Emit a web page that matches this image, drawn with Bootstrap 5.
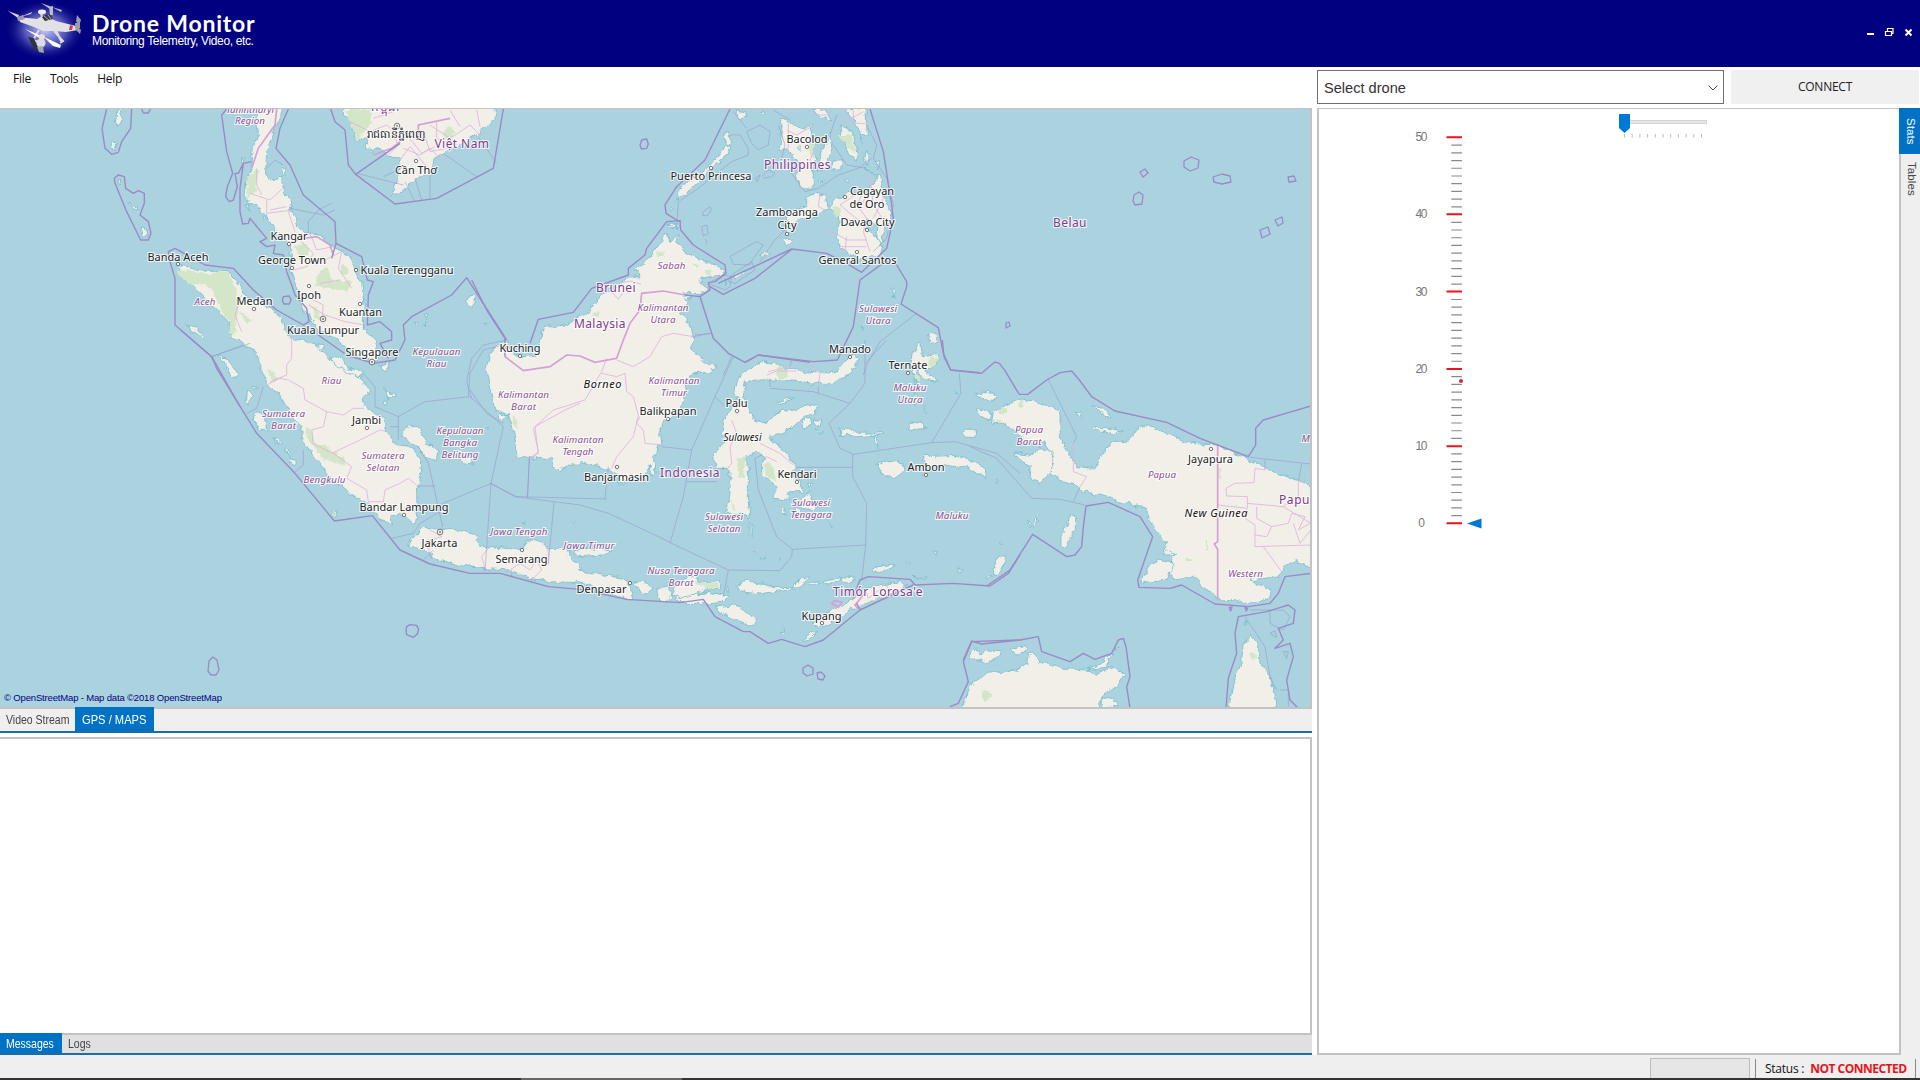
<!DOCTYPE html>
<html lang="en">
<head>
<meta charset="utf-8">
<title>Drone Monitor</title>
<meta name="viewport" content="width=device-width, initial-scale=1">
<link href="https://cdn.jsdelivr.net/npm/bootstrap@5.3.0/dist/css/bootstrap.min.css" rel="stylesheet">
<style>
  html, body { height: 100%; overflow: hidden; }
  body { font-family: "Liberation Sans", Arial, sans-serif; font-size: 12px; line-height: 1; color: #444; background: #fff; }
  svg { display: block; }
  .titlebar { height: 67px; background: #000080; color: #fff; }
  .app-name { font-family: Lato, sans-serif; font-weight: 700; font-size: 23px; line-height: 22px; letter-spacing: .78px; }
  .app-sub { font-size: 12px; line-height: 14px; letter-spacing: -.36px; }
  .menu-strip { height: 41px; width: 1312px; font-family: "Open Sans", sans-serif; font-size: 12px; padding: 6px 0 0 13px; gap: 19px; color: #111; letter-spacing: -.28px; }
  .work { height: 988px; }
  .left-col { width: 1312px; }
  .map-frame { height: 601px; border: solid #c3c3c3; border-width: 1px 2px 2px 0; }
  .tabs-map { height: 24px; background: #efefef; border-bottom: 2px solid #1c6ca8; }
  .ui-tab { padding: 0 0 0 6px; display: flex; align-items: center; white-space: nowrap; }
  .ui-tab span { transform: scaleX(.875); transform-origin: 0 50%; }
  .ui-tab.on { background: #0072c6; color: #fff; }
  .tabs-map .on { margin-top: -2px; padding-top: 2px; width: 79px; padding-left: 7px; }
  .tabs-map .on span { transform: scaleX(.93); }
  .tabs-map .off { width: 75px; }
  .msg-box { height: 298px; margin-top: 4px; border: solid #c3c3c3; border-width: 2px 2px 2px 0; background: #fff; }
  .tabs-msg { height: 20px; background: #e0e0e0; border-bottom: 2px solid #1c6ca8; }
  .tabs-msg .on { width: 62px; margin-top: -2px; padding-top: 2px; }
  .right-col { padding-left: 5px; }
  .connect-row { height: 41px; padding-top: 3px; gap: 7px; }
  .drone-select { width: 407px; height: 34px; border: 1px solid #707070; padding: 2px 5px 0 6px; font-size: 14.6px; color: #333; }
  .btn-connect { width: 188px; height: 34px; background: #f0f0f0; border: 0; border-radius: 0; font-family: "Open Sans", sans-serif; font-size: 12px; color: #222; padding: 0; letter-spacing: -.25px; }
  .stats-panel { width: 584px; border: 2px solid #c3c3c3; border-top-width: 1px; }
  .side-tabs { width: 19px; background: #efefef; }
  .side-tabs div { writing-mode: vertical-rl; width: 19px; line-height: 17px; padding-top: 8px; font-size: 11.5px; letter-spacing: .1px; }
  .side-tabs .on { width: 21px; line-height: 19px; margin-left: -2px; height: 46px; background: #0072c6; color: #fff; padding-top: 10px; }
  .statusline { height: 23px; background: #efefef; font-family: "Open Sans", sans-serif; color: #111; }
  .state-text { width: 159px; padding: 8px 0 0 9px; white-space: nowrap; letter-spacing: -.25px; }
  .state-text b { margin-left: 6px; color: #e8141c; letter-spacing: -.5px; }
  .meter { width: 100px; height: 20px; margin-top: 3px; background: #e6e6e6; border: 1px solid #bcbcbc; border-bottom: 0; }
  .vbar { width: 1px; height: 19px; margin-top: 4px; background: #888; }
  .vbar.first { margin-left: 5px; }
  .taskline { height: 2px; background: #333; padding-left: 521px; }
  .taskline div { width: 161px; height: 2px; background: #666; }
  .land path { fill: #f2efe9; stroke: #6bb8cc; stroke-width: 2.2; }
  .wood path { fill: #d3e6c7; }
  .sea path { fill: none; stroke: #9b8ac6; stroke-width: 4.2; stroke-linejoin: round; }
  .sea .loops path { stroke-width: 1.3; }
  .thin path { fill: none; stroke: #978fc5; stroke-width: 1.9; opacity: .8; }
  .adm path { fill: none; stroke: #deb5dc; stroke-width: 2.6; }
  .nat path { fill: none; stroke: #d3a0d4; stroke-width: 5; }
  .lbl { font-family: "Noto Sans", sans-serif; font-size: 11px; text-anchor: middle; paint-order: stroke; stroke: #fff; stroke-opacity: .8; stroke-width: 2.2px; fill: #222; }
  .lbl .pv { font-style: italic; font-size: 9.8px; fill: #8a4f90; }
  .lbl .ct { font-size: 12px; fill: #7d3b8b; letter-spacing: .5px; }
  .lbl .is { font-style: italic; fill: #111; }
  .towns circle { fill: #fff; stroke: #555; stroke-width: .8; }
</style>
<script src="https://cdn.jsdelivr.net/npm/bootstrap@5.3.0/dist/js/bootstrap.bundle.min.js"></script>
</head>
<body class="d-flex flex-column">

<header class="titlebar d-flex flex-shrink-0">
  <svg width="92" height="67" viewBox="0 0 92 67">
    <defs><radialGradient id="glow"><stop offset="0" stop-color="#c8ccff"/><stop offset=".5" stop-color="#777bd0" stop-opacity=".7"/><stop offset="1" stop-color="#000080" stop-opacity="0"/></radialGradient></defs>
    <ellipse cx="45" cy="30" rx="41" ry="31" fill="url(#glow)"/>
    <path d="M18 17 37 19 44 15 56 21 72 25 79 27 78 30 66 32 54 31 43 31 34 27 20 22Z" fill="#e2e2e6"/>
    <path d="M41 16 50 14 53 19 45 21Z" fill="#333644"/><path d="M44 16l5 4M48 15l3 4" stroke="#aaa"/>
    <ellipse cx="42" cy="12" rx="4" ry="2.4" fill="#eee"/><path d="M41 13l1 4" stroke="#ddd" stroke-width="2"/>
    <path d="M8 11 19 15 18 18ZM20 17 32 12 31 14Z" fill="#d6d6dc"/>
    <path d="M17 17l6-2 2 4-7 2Z" fill="#99a"/>
    <path d="M41 3 52 7 50 9ZM52 7 62 10 61 12ZM49 7l4-1v9l-3 0Z" fill="#bcbcc6"/>
    <path d="M77 15 81 20 79 26 76 21ZM77 26 81 30 80 34 75 29ZM75 23h5v5h-5Z" fill="#9c9ca8"/>
    <path d="M70 25 73 26 72 30 69 30Z" fill="#d04040"/>
    <path d="M54 31 63 41 60 43M39 30 33 40 41 43M56 30l5 11" stroke="#ddd" stroke-width="2" fill="none"/>
    <path d="M25 29 42 36 41 39ZM44 37 61 45 60 48 53 46Z" fill="#fff"/>
    <path d="M28 37 34 38 39 51 34 49Z" fill="#30323d"/>
    <circle cx="41" cy="43" r="4.5" fill="#dcdce4"/><path d="M37 47 43 46 44 53 39 52Z" fill="#9aa"/><circle cx="42" cy="37" r="3" fill="#e8e0d8"/>
  </svg>
  <div class="flex-grow-1 pt-2">
    <div class="app-name mt-1">Drone Monitor</div>
    <div class="app-sub">Monitoring Telemetry, Video, etc.</div>
  </div>
  <svg width="60" height="67" viewBox="1860 0 60 67" fill="none" stroke="#fff" stroke-width="2">
    <path d="M1867 34h7"/><path d="M1885.500 31.500h6v4h-6zM1887.500 31v-2.500h5.500v5h-1.500" stroke-width="1.200"/><path d="M1905.500 29.500l6 6M1911.500 29.500l-6 6"/>
  </svg>
</header>

<main class="work d-flex flex-shrink-0">
  <section class="left-col flex-shrink-0 d-flex flex-column">
    <nav class="menu-strip d-flex flex-shrink-0"><span>File</span><span>Tools</span><span>Help</span></nav>
    <div class="map-frame flex-shrink-0">
      <svg width="1310" height="598" viewBox="0 109 1310 598">
        <defs>
          <filter id="coast" x="0" y="0" width="1" height="1"><feTurbulence type="fractalNoise" baseFrequency=".13" numOctaves="3" seed="4"/><feDisplacementMap in="SourceGraphic" scale="7" xChannelSelector="R" yChannelSelector="G"/></filter>
        </defs>
        <rect y="109" width="1310" height="598" fill="#aad3df"/>
        <g filter="url(#coast)">
        <rect y="109" width="1310" height="598" fill="#aad3df"/>
        <g class="land">
          <g transform="translate(90 105) scale(.33333)">
            <path d="M505 -6 498 60 505 90 490 120 485 190 470 220 462 270 475 300 500 295 515 320 540 350 550 380 580 400 600 420 606 470 600 490 620 540 635 600 660 640 690 680 740 700 770 730 830 765 862 768 870 745 845 690 820 670 822 600 815 530 790 480 760 440 730 425 690 390 650 385 620 360 607 320 600 285 580 265 575 220 535 225 527 190 530 140 545 100 560 60 590 -6Z"/>
            <path d="M760 -6V30L785 50 792 90 800 112 820 100 840 95 825 125 850 140 870 130 890 150 930 165 930 190 915 240 905 268 935 265 960 235 1020 200 1045 150 1090 130 1150 95 1190 60 1215 45 1216 -6Z"/>
            <path d="M80 20l12-5v30l-8 22-8-12zM64 112l12 0v24l-12-4zM85 225l10 3-4 8zM110 290l10 4-4 8zM128 310l14-6-5 14zM150 365l18 6 3 22-14 0zM290 660l18 5 36 28-4 6-42-24zM390 755l18 3 30 40 2 20-14 2-14-28zM454 160l12 0-5 14zM578 190l12 0v18l-10 4zM515 335l12 4-5 10zM468 300l8 0 0 22zM1130 575l20-5 6 22-12 15-14-12zM972 652l12 2-8 12zM1004 632l10 0-4 12zM1004 650l8 5-6 8zM1184 655l8 2-4 6zM682 715l15-4 7 15-10 16-16-10zM722 752l28 6 20 30 30 5 20 15-14 12-28-10-20-14-22-12zM866 785l32-12-2 24-16 2zM885 850l20 15 15 0-5 10-18 0 0 8zM876 886l16 0-6 15-8-5zM486 848l18 0 0 6-18 0zM473 858l10 12-5 28-10-8z"/>
          </g>
          <g transform="translate(160 330) scale(.33333)">
            <path d="M52 -197 120 -177 200 -175 230 -145 255 -105 310 -75 370 -35 375 0 400 30 440 35 470 45 500 75 530 110 575 130 600 150 635 180 610 205 612 230 640 250 675 265 680 310 715 345 755 350 775 380 785 410 775 450 770 500 772 560 765 582 745 570 720 550 690 560 695 588 660 560 630 530 600 510 560 480 510 440 470 390 430 340 420 290 380 230 355 190 320 165 300 110 290 70 250 45 215 20 210 -20 180 -50 130 -100 80 -150Z"/>
            <path d="M283 250 305 248 320 280 322 303 300 300 280 270ZM342 323l10 4 10 18-10 0zM373 352l12 10 2 20 18 10 0 16-12-8-12-25zM518 545l16 4-4 8-14-4zM725 315 745 290 778 290 800 340 835 360 828 390 800 380 770 350 735 325ZM900 380l40 0-5 22-30-4zM1015 250l28 8-15 14-12-4zM975 290l10 0-4 8z"/>
            <path d="M740 650 770 610 790 590 840 600 870 595 950 615 960 650 1000 650 1080 660 1105 630 1130 630 1165 655 1220 655 1240 690 1270 725 1330 735 1395 745 1420 790 1415 812 1370 800 1320 775 1260 758 1170 755 1110 745 1050 720 960 715 880 700 810 685 815 670 760 650ZM1240 665l60-10 55 5-20 14-80 6zM1425 755l40 5 15 18-20 16-35-26zM1490 775l30-6 15 22-10 25-25-2zM1545 780l30-20 40 12 0 20 30-5 60 10-20 20-40 5-60-2-40-10zM1232 575l10 0-2 10zM1087 575l4 0 0 8z"/>
          </g>
          <g transform="translate(470 210) scale(.33333)">
            <path d="M110 395 125 430 160 440 195 435 210 420 215 370 225 350 300 340 350 310 380 270 420 240 470 205 510 200 495 175 540 140 575 95 590 70 600 95 625 70 620 95 650 130 690 150 740 160 760 180 750 195 690 205 690 220 720 240 690 250 640 250 650 280 630 310 660 340 670 380 665 410 700 455 740 475 700 490 665 490 645 530 645 570 600 625 570 650 575 700 550 740 555 790 545 800 540 765 530 790 500 800 450 825 440 790 390 770 330 755 260 783 245 750 200 745 145 740 130 660 110 610 75 600 60 540 48 480 60 430 90 395Z"/>
            <path d="M595 45l20-5-5 15zM618 40l8 5-5 15zM640 260l22 4-15 8zM790 200l35-22-5 12-25 18zM868 135l18-8 18 4-20 12zM765 205l8 10-6 14z"/>
          </g>
          <g transform="translate(640 105) scale(.33333)">
            <path d="M110 285 118 255 150 220 185 205 220 165 260 120 275 128 265 150 210 195 190 225 155 245 135 270ZM255 80l12 0 4 40-14-4zM285 15l30 5 5 12-22 10zM365 18l15-4-2 15zM425 40l30 20 45 10 15-8-2 75 15 20-12 60 8 22-14 15-25-8-14-20 5-60-40-35-15 6 5-40zM570 85 577 140 545 195 528 200 540 160 555 110ZM580 165l26 0 4 15-15 15-22-8zM518 10l28 0 30 38-35-12zM600 60l40 20 8 55 8 30-30-15-18-60zM612 12l65-4 5 85-20 0-20-50zM672 190l22 15 28 10 10 55 20 50-4 35-15 10-10 58-12-20 2-40-30-20-8 30 25 10 30 45-8 30-30-5-32 12-60-40-12-30 10-40-5-30-25-15 22-30 40-18 50 0 35-45zM440 330l40-20 20-5 0-30 35-12 22 15 4 30-25 15-5 20-45-5-30 20-5 25-14 0zM422 403l20-6 12 10-14 12zM680 140l8 12-6 28-8-20zM705 170l14 0-4 25zM472 125l12-6-2 20zM535 222l14 4-8 6zM610 225l16 0-6 8zM85 355l25 0-8 10zM92 305l8 5-4 12zM755 545l12 10-4 22zM664 662l4 12-4-2zM662 95l8 15-6-2z"/>
          </g>
          <g transform="translate(680 340) scale(.33333)">
            <path d="M165 195 175 170 160 160 175 120 185 100 210 90 235 65 280 70 300 85 340 85 370 95 420 100 470 95 500 60 520 45 535 50 525 80 490 115 460 130 400 130 310 120 230 120 200 125 185 170 215 215 225 245 260 245 300 215 350 210 380 195 410 195 410 220 370 230 330 270 280 285 265 290 300 320 330 350 345 385 330 400 365 430 370 455 320 455 325 480 285 475 285 440 245 400 245 370 260 350 230 335 195 350 205 385 205 490 210 530 185 520 140 520 150 460 150 400 145 385 105 385 100 340 130 310 130 240Z"/>
            <path d="M370 240l20-5 5 20-20 10zM400 240l22 0-5 18-15 0zM405 268l20 8-8 4zM478 265l30 0 32 15 75-2-10 6-70 6-30-4-26 4zM580 290l10 0 4 30-8-8zM290 185l50-14-8 10-36 12zM722 5l5 45 20-2 25-5-2 30-35 20 38 30-45-5-15-30-8 35 8 60-10 10 4-70-14-55 4-30zM745 -15l20-5 5 25-16 6zM690 246l40 5 5 15-50 2zM735 200l5 15-8-4zM848 278l15-10 25 0 2 18-30 6zM888 160l40-6 25 15-15 12-50-12zM890 208l30 0 15 12-5 20-20-5zM820 150l14 14-8-4zM590 375l30-12 48 8 8 20-35 22-35-12zM732 350l100-4 35 15 45 20 8 32-60-30-50-5-78 5zM1000 340l25-2 0 14-25-4zM725 403l18 0-8 8zM382 430l18 0-10 12zM378 460l12-5 6 35 14 10-12 14-30-14-3-20zM305 500l10 5 4 20-8-2zM345 500l20 10 0 30-18-10zM210 550l5 0 2 40-6-4zM220 632l10 4-6 6zM232 650l25 5-10 2zM298 652l6 4-4 4zM168 740 200 720 280 740 340 740 370 710 385 712 368 740 300 752 240 762 180 755ZM385 730l25-8 10 6-25 10zM430 725l50-12-5 10-40 12zM480 715l45-4 0 10-40 8zM0 720l50-12 10 18 55-5 5 25-60 10-60 20-30-10zM140 735l8 8-4 12zM108 800 170 795 235 840 220 857 180 845 110 815ZM415 860 400 850 420 830 520 775 560 745 660 725 682 735 620 770 530 800 470 840 430 862ZM370 900l20-18 22-8-8 14-20 14zM295 875l20-6-8 12zM576 690l20-10 45-8-5 12-55 14zM700 710l40 5-10 4zM832 690l18 0-8 10zM760 636l12 2-6 8zM680 666l10 4-8 4zM940 685 955 650 972 645 978 660 955 700 942 700ZM965 605l8 2-6 8zM920 712l15-6-5 10zM950 425l8 2-4 8zM445 545l12 18-6-4z"/>
          </g>
          <g transform="translate(950 380) scale(.33333)">
            <path d="M545 160 585 135 625 150 720 190 800 195 880 230 940 262 1010 290 1050 300 1100 330 1100 575 1040 545 1000 560 990 590 900 600 965 630 960 650 920 670 860 662 805 662 770 630 730 590 670 600 655 570 670 530 640 505 650 490 610 440 590 385 530 370 450 345 400 335 375 315 330 300 300 275 310 230 290 200 280 185 240 195 190 150 165 130 125 130 130 100 165 75 215 57 260 65 330 90 330 180 365 230 380 260 430 265 485 185 540 180Z"/>
            <path d="M190 220 240 225 270 205 310 215 300 280 270 310 245 300 240 265ZM575 608 590 565 625 538 665 545 665 575 650 600ZM640 505l40 18-30 2zM425 140l50 5 45 8-30 8-60-12zM425 78l25 5 35 25-20 5-15-20zM378 98l14-2-4 14zM360 400l16 15 0 35-15 20-10 30-18 2 0-45 18-15zM262 398l6 0-8 30-10 12zM235 420l8 10-6 8zM890 780l8 4-8 4zM880 725l14 5-6 8z"/>
            <path d="M30 1000 60 920 110 880 200 870 230 850 240 815 270 845 340 865 400 870 440 880 490 860 525 880 500 920 455 945 450 1000ZM55 840 75 800 90 825 110 810 155 812 150 830 110 850 90 840ZM178 805l50-8 2 14-25 12-20-6zM835 1000 850 900 875 850 880 790 905 770 925 800 930 850 960 890 975 940 978 1000ZM410 868l45-18 50-50-40 62zM455 950l30 5 20 20-40 15z"/>
          </g>
        </g>
        <g class="wood">
          <g transform="translate(90 105) scale(.33333)"><path d="M262 490 300 500 350 510 380 500 415 505 440 560 445 610 435 690 420 690 420 650 390 610 370 560 340 535 300 540 270 515ZM765 12 840 12 845 50 820 80 800 110 785 60ZM1060 80l20-15 15 15-10 20-20 0zM470 220l30-30 10 30-20 50-20 10zM610 420l40 0 10 30-30 15zM690 500l20-15 15 40 60 5-10 30-40-10-60-5zM755 480l20 5 0 25-20-5zM660 600l20 10 15 40-20-10zM300 665l35 30-8-2zM440 610l20 20 30 10-20 15zM530 790l30 20-10 15z"/></g>
          <g transform="translate(160 330) scale(.33333)"><path d="M430 290 450 300 465 340 500 345 520 365 550 380 560 410 520 395 490 390 470 360 440 320ZM320 120l30 20-10 10zM515 545l20 8-18 4z"/></g>
          <g transform="translate(470 210) scale(.33333)"><path d="M370 310l20-10-4 20-20 0zM562 125l16 0 0 20-16-5zM665 160l25 5-8 10zM125 615l18 15 0 30-15-20zM700 180l25 4 0 12-20-4z"/></g>
          <g transform="translate(640 105) scale(.33333)"><path d="M595 90l40 0 10 50-20-15zM580 310l25-5 0 30-20 0zM415 795l30 0 0 20-30 0zM510 105l15 15-5 40-10-20zM868 755l22 8-10 25-15-10z"/></g>
          <g transform="translate(680 340) scale(.33333)"><path d="M290 85h25v30h-20ZM170 355h25v55h-20ZM250 370l20-5 20 60-30-15zM155 480l15 30-12-5zM750 60l22-10-5 22-20 8zM700 105l20 0-5 20zM45 720l20 10 45-5 5 20-30 5-30-12z"/></g>
          <g transform="translate(950 380) scale(.33333)"><path d="M150 85h22v18h-22ZM208 62h12v20h-12ZM140 118h16v12h-16ZM95 935l25-6 0 25-20 10zM900 815l14 6 8 20-14 0zM805 260h6v40h-6ZM768 480h6v30h-6ZM710 535l16 0 0 8-16 0z"/></g>
        </g>
        </g>
        <g class="adm">
          <g transform="translate(90 105) scale(.33333)"><path d="M500 190v50l15 30M480 265l60 20 50-45M530 285v40l80-10M540 315l50-10M595 320l20 60M560 375l40 40 30-10 40 40-20 40-40 10M660 385l20 50 50-10M675 480l80-40-10 50 40 60M690 535l60-10M655 600l50 30 60 20 60 10M640 570l60 30-5 50M455 570l-20 60 20 50M605 690v70l-15 20v30l-50 20M780 50l60 30 50-20 40 30 70-10M850 40l60-20M895 150l30-30-15-30M930 165l30-40 50 60M940 130l50 20 30-20 40 40M955 95l40 50 40-20M1000 80l20 60 50-10M1020 60l60 40 60-40 30 30M1080 15l30 50M1160 15l10 50M1040 50v50l60 20"/></g>
          <g transform="translate(160 330) scale(.33333)"><path d="M320 165 360 145 385 150 430 175 435 210 500 245 550 255 580 235 612 235M500 245 490 290 455 300 460 340 515 370 600 330 660 300 680 305M520 370 575 410 560 445 620 480 625 515 670 515 675 480 720 460 745 445 770 465M810 600l35 20-35 10-5 50M985 655 965 680 975 715M1050 720l30-20 30 20 20-30 15 30-30 30M1165 655v50M1105 380v10M1260 220l-45 20-90 50 10 80-30 20"/></g>
          <g transform="translate(470 210) scale(.33333)"><path d="M180 745 205 725 190 655 250 600 345 570 395 485 410 445M395 490 440 500 465 490 470 545 490 560 505 615 490 680 440 740 425 775M510 620 500 640 520 660 525 700 575 705M440 450 490 470 540 440 575 380 610 370 670 380M420 240l25 28 20-30-12-20 30-5 30 10"/></g>
          <g transform="translate(640 105) scale(.33333)"><path d="M445 55v75M440 75l30 15 45-25M500 190l25-60M600 60l70-40M640 15l0 40 40 0M540 265l-5 40 20 10M670 260l-20 40 30 40-10 40 20 60M570 375l50 30h60M620 395l-5 45M690 210l10 90 40 60M660 260l-60 40 60 50M600 425h80M700 230l-40 80M520 30h50M385 800l60-15M730 280l-30 60"/></g>
          <g transform="translate(680 340) scale(.33333)"><path d="M260 105l30-12 60 0M390 70l30 30-5 35M155 240l15 40-20 40 5 50-15 20M240 310 300 340 340 375M260 350l30 15M555 745l10 30 40-30M620 735l10 30M455 790l25 10"/></g>
          <g transform="translate(950 380) scale(.33333)"><path d="M370 190V275L410 290 390 320M945 270 915 265 912 308 855 310 828 325 830 348 892 350 892 385 805 375M892 370 1000 380 1083 430M885 415 915 435V500L1083 495M920 380v35l45 25-15 30-35-5M965 440l50-10 10-30 40 10-20 40 35-20M1045 300v60M1000 380l40-30M940 500l55 75M1030 430l20 60 33-40"/></g>
        </g>
        <g class="nat">
          <g transform="translate(90 105) scale(.33333)"><path d="M560 12 555 60 505 130 485 190M640 400 680 395 720 420 730 450M850 150 905 130 930 110M985 100 985 60 1080 40"/></g>
          <g transform="translate(470 210) scale(.33333)"><path d="M105 440 160 482 240 470 290 435 330 438 375 457 440 445 460 390 480 340 510 300 515 250 580 243 645 255"/></g>
          <g transform="translate(680 340) scale(.33333)"><path d="M455 790l10-8 20 4-10 16zM515 780l15-15 20 0-25 30 8 10"/></g>
          <g transform="translate(950 380) scale(.33333)"><path d="M803 195V485L793 492 803 508V660"/></g>
        </g>
        <g class="thin">
          <g transform="translate(90 105) scale(.33333)"><path d="M800 205 940 240M880 215 935 190M945 230l30 60M975 220l20 65M1020 200v80M1060 145l100 70M1165 95l55 80M530 190l25-25 25 15M600 310l100 20 35-15M655 380v-30l30-35 40-20M365 755 480 715M1250 705 1180 720 1145 760 1130 830 1145 880"/></g>
          <g transform="translate(160 330) scale(.33333)"><path d="M150 82 250 45M260 250 290 235 310 170M400 430 430 405 430 360M610 130 645 170V230L715 260V330M690 290h25M715 260 795 215 930 200 970 235 1030 290 993 460 975 725M925 200 930 130 970 60 1030 45M775 350 805 400 848 590M770 468H825M845 522 993 460 1065 500 1260 525M1108 385 1103 503M1182 517 1165 700M695 625 760 610 780 580 840 545M790 690l30-30M1055 720v20M1115 745v15M1260 525 1345 550 1475 610 1560 652"/></g>
          <g transform="translate(470 210) scale(.33333)"><path d="M0 540 50 610 100 640M178 745 172 860M60 820 140 860 410 867M415 770 405 867M575 710 665 720 735 560 790 440M735 560 765 590M665 720 640 860 600 1000M670 380 720 370M650 815H740"/></g>
          <g transform="translate(640 105) scale(.33333)"><path d="M830 625 720 710 680 780 670 810M165 690 215 685M275 755 250 810M320 80l40-20 30 20-5 40-30 15-20-20zM270 90l30 0 25 40 0 20-50 20-100 80-60 40-5 80M280 20l40 50M400 15l50 30M415 60l20 60-10 40 40 60 30 40 40-10 60-40 60-20 40-30M580 120l40 60 60 10M590 30l-30 90M680 60l30 60-10 40 40 60 20 80-20 100-40 40M360 470l40-60 40-40M190 320l20-15 4 10-12 18-14-2zM185 365l15-5 5 25-15 8zM345 220l15-10-8 20zM195 402l6 8-4 8M270 455l60-35 20-10 20 10-30 40-10 20-50-2zM365 215l20-20 20 10-10 10-25 5M205 535l45-25 25 5-5 30-15 10zM275 510l60-40 10 25-60 40-20-5z"/></g>
          <g transform="translate(680 340) scale(.33333)"><path d="M555 0V130L510 190 447 250 480 325 520 343 755 308 825 305 950 340 1020 400M620 0 555 70M838 100 843 160 755 308M270 145 400 155 510 190M270 140V115M415 140v20M335 60l-5 20M345 382H518M518 343V410L560 490 557 615 545 720M557 615 337 628 290 590 235 450 225 355 245 345M337 628 335 650 300 692 145 690 0 622M145 690 130 770"/></g>
          <g transform="translate(950 380) scale(.33333)"><path d="M295 0 330 70 380 170 370 190M60 200 140 235 245 355 330 358 405 375M390 320 370 365M900 232 1083 252M945 240v30M1055 252l-10 50M885 710l60 90 15 90 20 40M900 690l100 0 20 20-20 40-40-20 0-40M960 760l15-8 5 20zM1000 815l15 0-5 20zM990 930l25 0 0 50"/></g>
        </g>
        <g class="sea">
          <g transform="translate(90 105) scale(.33333)"><path d="M50 12 36 70 45 130 65 148 85 142 95 110 122 70 125 12M155 12l5 12 15 0 6-12M75 235 73 220 85 210 103 215 107 250 130 265 145 257 163 265V295L150 330 175 350 183 385 175 405H152L110 320ZM410 12 395 30 410 140 428 205 412 245 407 275 418 290 430 285 442 245 435 205 445 205 460 175 485 170M460 175 450 250 450 320 458 357 475 355 480 340 530 400 510 410 530 425 555 420 550 445 580 450 590 500 605 540 615 570 650 610 657 650 640 660 560 615 490 555 430 490 345 480 255 430 235 440 240 470 255 520V660L365 755 450 905M685 690 770 750 850 775 915 765 945 705 940 660 965 635 1085 570 1130 518 1250 705M595 12 570 70 558 130 600 180 640 270 735 350 738 415 815 455 832 525 850 530 835 570 832 660 870 650 905 680 905 705 870 715 895 760M738 415 725 460M722 12 735 50 765 75 775 180 797 208 915 297 1040 280 1210 190 1240 12M797 208 930 115M580 575l18-2 5 12-5 12-16 0-5-10z"/></g>
          <g transform="translate(160 330) scale(.33333)"><path d="M62 0 155 80 170 115 250 245 290 310 405 430 523 573 637 557 720 660 810 702 930 730H1020L1165 770 1260 778 1400 808 1560 818M740 890l10-6 20 2 6 12-4 14-12 10-20-8-2-12z"/></g>
          <g transform="translate(470 210) scale(.33333)"><path d="M5 210 50 300 105 385V440M180 400 205 328 310 307 365 235 475 195 475 175 525 135 530 115 590 35 630 32 632 60 670 105 765 165 768 190 735 215 715 218 720 240 690 260 645 255M720 230 760 253 855 205 965 118M690 260 730 385 775 430 825 457 865 435 1020 457"/></g>
          <g transform="translate(640 105) scale(.33333)"><path d="M270 12 195 165 110 245 75 300 78 325 110 345 122 350M235 535 455 432 560 445 620 475 665 502 740 430 760 340 755 300 730 140 690 12M770 480 800 530V545L783 597 895 668 910 745 932 795 1020 803M770 478 735 470 660 525 640 665 592 765 520 770 355 750 315 772M5 105l15-3 5 15-5 13-16 2-4-12z"/></g>
          <g transform="translate(680 340) scale(.33333)"><path d="M787 0 792 50 812 90 905 100 930 78 945 66 958 70 975 92 1017 162M0 788 70 778 105 830 190 875 210 875 265 910 305 898 375 920 430 900 540 810 700 735M520 770 540 720 565 710 690 718 705 735 820 730 930 738 985 700 1020 645M540 808 530 790M850 960 875 903 905 912 1020 900"/></g>
          <g transform="translate(950 380) scale(.33333)"><path d="M207 43H233L290 0 330 -22 365 -27 388 0 425 50 495 93 650 127 750 175 895 230 917 195V145L940 120 1083 78M110 618 180 570 248 463 350 530 375 525 395 500 400 440 408 378 475 367 570 410 608 470 563 600 567 622 660 625 695 615 795 672 895 680 960 670 985 640 1005 590 1083 580M0 980 25 970 55 905 40 845 65 785 210 780 265 770 275 815 360 845 400 820 435 838 485 820 505 780 520 775 528 800 540 890 530 920 540 985M828 985 835 895 860 820 855 760 865 710 950 695 1015 675 1035 690 1030 730 985 745 1000 780 975 805 1020 790 1030 830 1010 900 1020 960 1045 985M838 683l8-2-4 12zM885 683l8 2-4 8z"/></g>
          <g class="loops"><path d="M209 661l4-4 4 3 1 5 1 5-3 5-5 0-3-4zM803 668l5-3 5 3 0 6-6 2-4-3zM817 673l4-1 4 4-2 4-5-1zM1184 161l7-4 8 3-1 8-8 3-6-4zM1134 195l5-3 4 3-1 9-7 1-2-4zM1213 177l9-3 8 2 1 6-9 2-8-2zM1260 230l8-3 2 7-8 4zM1275 220l7-3 1 6-5 3zM1288 177l6-1 2 5-7 1zM1140 172l5-3 3 4-5 4zM1006 323l3-1 1 4-4 2z"/></g>
        </g>
        <g class="towns">
          <circle cx="178" cy="264" r="1.700"/><circle cx="254" cy="309" r="1.700"/><circle cx="289" cy="244" r="1.700"/><circle cx="292" cy="268" r="1.700"/><circle cx="309" cy="286" r="1.700"/><circle cx="356" cy="270" r="1.700"/><circle cx="360" cy="304" r="1.700"/><circle cx="416" cy="161" r="1.700"/><circle cx="367" cy="428" r="1.700"/><circle cx="404" cy="515" r="1.700"/><circle cx="522" cy="550" r="1.700"/><circle cx="520" cy="356" r="1.700"/><circle cx="668" cy="419" r="1.700"/><circle cx="617" cy="467" r="1.700"/><circle cx="737" cy="411" r="1.700"/><circle cx="711" cy="168" r="1.700"/><circle cx="807" cy="147" r="1.700"/><circle cx="787" cy="234" r="1.700"/><circle cx="845" cy="197" r="1.700"/><circle cx="867" cy="230" r="1.700"/><circle cx="857" cy="252" r="1.700"/><circle cx="850" cy="357" r="1.700"/><circle cx="908" cy="373" r="1.700"/><circle cx="797" cy="482" r="1.700"/><circle cx="926" cy="475" r="1.700"/><circle cx="822" cy="623" r="1.700"/><circle cx="1211" cy="449" r="1.700"/><circle cx="630" cy="583" r="1.700"/>
          <g><circle cx="323" cy="319" r="2.800"/><circle cx="323" cy="319" r=".8"/><circle cx="372" cy="362" r="2.800"/><circle cx="372" cy="362" r=".8"/><circle cx="397" cy="126" r="2.800"/><circle cx="397" cy="126" r=".8"/><circle cx="440" cy="532" r="2.800"/><circle cx="440" cy="532" r=".8"/></g>
        </g>
        <g class="lbl" transform="translate(0 -.3)">
          <text x="178" y="261" textLength="61">Banda Aceh</text><text x="254.500" y="305.500" textLength="36">Medan</text><text x="289" y="240.500" textLength="37">Kangar</text><text x="292" y="264" textLength="68">George Town</text><text x="309" y="299" textLength="24">Ipoh</text><text x="407" y="274" textLength="93">Kuala Terengganu</text><text x="360.500" y="316" textLength="43">Kuantan</text><text x="323" y="334" textLength="72">Kuala Lumpur</text><text x="372" y="356" textLength="53">Singapore</text>
          <text x="396" y="138" textLength="58">រាជធានីភ្នំពេញ</text><text x="416" y="174.500" textLength="42">Cần Thơ</text>
          <text x="366.500" y="424" textLength="29">Jambi</text><text x="404" y="511" textLength="89">Bandar Lampung</text><text x="439.500" y="547.500" textLength="36">Jakarta</text><text x="521.500" y="563" textLength="52">Semarang</text><text x="601.500" y="593" textLength="50">Denpasar</text>
          <text x="520" y="352" textLength="41">Kuching</text><text x="668" y="415.500" textLength="57">Balikpapan</text><text x="616.500" y="481" textLength="65">Banjarmasin</text><text x="736.500" y="407.500" textLength="22">Palu</text>
          <text x="711" y="180" textLength="81">Puerto Princesa</text><text x="807" y="143" textLength="41">Bacolod</text><text x="787" y="216" textLength="62">Zamboanga</text><text x="787" y="229.500" textLength="19">City</text><text x="872" y="195" textLength="44">Cagayan</text><text x="867" y="208.500" textLength="35">de Oro</text><text x="867.500" y="226" textLength="54">Davao City</text><text x="857.500" y="264" textLength="78">General Santos</text>
          <text x="850" y="353" textLength="42">Manado</text><text x="908" y="369" textLength="39">Ternate</text><text x="797" y="478" textLength="39">Kendari</text><text x="926" y="471" textLength="37">Ambon</text><text x="821.500" y="620" textLength="40">Kupang</text><text x="1210.500" y="463" textLength="45">Jayapura</text>
          <g class="is"><text x="602.500" y="388.500" textLength="38">Borneo</text><text x="742.500" y="441.500" font-size="10" textLength="38">Sulawesi</text><text x="1216" y="517.500" textLength="63">New Guinea</text></g>
          <g class="ct"><text x="462" y="148.500" textLength="55">Việt Nam</text><text x="616" y="292.500" textLength="40">Brunei</text><text x="600" y="328" textLength="52">Malaysia</text><text x="690" y="477.500" textLength="60">Indonesia</text><text x="797.500" y="169" textLength="67">Philippines</text><text x="1070" y="227" textLength="34">Belau</text><text x="878" y="596" textLength="90">Timór Lorosa'e</text><text x="1294.500" y="504" textLength="31">Papu</text><text x="386" y="111">កម្ពុជា</text></g>
          <g class="pv"><text x="250" y="113" textLength="48">Tanintharyi</text><text x="250" y="124.500" textLength="30">Region</text><text x="205" y="305" textLength="21">Aceh</text><text x="331.500" y="384" textLength="20">Riau</text><text x="436.500" y="355.500" textLength="48">Kepulauan</text><text x="436.500" y="367.500" textLength="20">Riau</text>
          <text x="283.500" y="417.500" textLength="43">Sumatera</text><text x="283.500" y="429.500" textLength="25">Barat</text><text x="324.500" y="483" textLength="42">Bengkulu</text><text x="383" y="459" textLength="43">Sumatera</text><text x="383" y="471" textLength="33">Selatan</text><text x="460" y="434" textLength="47">Kepulauan</text><text x="460" y="446" textLength="34">Bangka</text><text x="460" y="458" textLength="37">Belitung</text><text x="519" y="535.500" textLength="57">Jawa Tengah</text><text x="589" y="549.500" textLength="51">Jawa Timur</text>
          <text x="523.500" y="398.500" textLength="51">Kalimantan</text><text x="523.500" y="410" textLength="25">Barat</text><text x="578" y="443" textLength="51">Kalimantan</text><text x="578" y="455" textLength="31">Tengah</text><text x="663" y="311" textLength="51">Kalimantan</text><text x="663" y="323" textLength="25">Utara</text><text x="674" y="384.500" textLength="51">Kalimantan</text><text x="674" y="396.500" textLength="26">Timur</text><text x="671.500" y="269" textLength="28">Sabah</text>
          <text x="878" y="312" textLength="38">Sulawesi</text><text x="878" y="324" textLength="25">Utara</text><text x="910" y="391" textLength="33">Maluku</text><text x="910" y="403" textLength="25">Utara</text><text x="811" y="506" textLength="38">Sulawesi</text><text x="811" y="518" textLength="41">Tenggara</text><text x="724" y="520" textLength="38">Sulawesi</text><text x="724" y="532" textLength="33">Selatan</text><text x="952" y="519" textLength="33">Maluku</text><text x="681" y="574" textLength="67">Nusa Tenggara</text><text x="681" y="586" textLength="25">Barat</text>
          <text x="1029" y="433" textLength="28">Papua</text><text x="1029" y="445" textLength="25">Barat</text><text x="1162" y="478" textLength="28">Papua</text><text x="1245.500" y="577" textLength="35">Western</text><text x="1305.500" y="442">M</text></g>
        </g>
        <text x="4" y="701" font-size="9.500" fill="#000080" textLength="218">© OpenStreetMap - Map data ©2018 OpenStreetMap</text>
      </svg>
    </div>
    <div class="tabs-map d-flex flex-shrink-0"><div class="ui-tab off"><span>Video Stream</span></div><div class="ui-tab on"><span>GPS / MAPS</span></div></div>
    <div class="msg-box flex-shrink-0"></div>
    <div class="tabs-msg d-flex flex-shrink-0"><div class="ui-tab on"><span>Messages</span></div><div class="ui-tab"><span>Logs</span></div></div>
  </section>

  <section class="right-col flex-grow-1 d-flex flex-column">
    <div class="connect-row d-flex flex-shrink-0">
      <div class="drone-select d-flex align-items-center justify-content-between"><span>Select drone</span><svg width="10" height="6" fill="none" stroke="#444"><path d="M.5.5 5 5 9.500.5"/></svg></div>
      <button class="btn btn-connect">CONNECT</button>
    </div>
    <div class="d-flex flex-grow-1">
      <div class="stats-panel">
        <svg width="580" height="420" viewBox="1319 109 580 420" font-size="12" fill="#777">
          <path d="M1456.600 144.500V523" stroke="#8a8a8a" stroke-width="10.600" stroke-dasharray="1.200 6.520"/>
          <path d="M1446.500 137.300h15.500m-15.500 77h15.500m-15.500 77.200h15.500m-15.500 77.500h15.500m-15.500 77.300h15.500m-15.500 77h15.500" stroke="#fff" stroke-width="5"/>
          <path d="M1446.500 137.300h15.500m-15.500 77h15.500m-15.500 77.200h15.500m-15.500 77.500h15.500m-15.500 77.300h15.500m-15.500 77h15.500" stroke="#e8141c" stroke-width="2"/>
          <g text-anchor="middle"><text x="1421.500" y="141" textLength="12">50</text><text x="1421.500" y="218" textLength="12">40</text><text x="1421.500" y="295.500" textLength="12">30</text><text x="1421.500" y="372.500" textLength="12">20</text><text x="1421.500" y="450" textLength="12">10</text><text x="1421.500" y="527">0</text></g>
          <circle cx="1461" cy="381" r="2" fill="#d22a2a"/>
          <path d="M1467 523.500 1481.500 518.500V528.500Z" fill="#0078d7"/>
          <rect x="1620.500" y="120.500" width="86" height="3" fill="#e7e7e7" stroke="#d3d3d3"/>
          <path d="M1619 114h11v14l-5.500 5-5.500-5z" fill="#0078d7"/>
          <path d="M1624 135.800h78" stroke="#bbb" stroke-width="3.500" stroke-dasharray="1 6.700"/>
        </svg>
      </div>
      <div class="side-tabs"><div class="on">Stats</div><div>Tables</div></div>
    </div>
  </section>
</main>

<footer class="statusline d-flex justify-content-end flex-shrink-0">
  <div class="meter"></div>
  <div class="vbar first"></div>
  <div class="state-text"><span>Status :</span><b>NOT CONNECTED</b></div>
  <div class="vbar me-1"></div>
</footer>
<div class="taskline flex-shrink-0"><div></div></div>
</body>
</html>
